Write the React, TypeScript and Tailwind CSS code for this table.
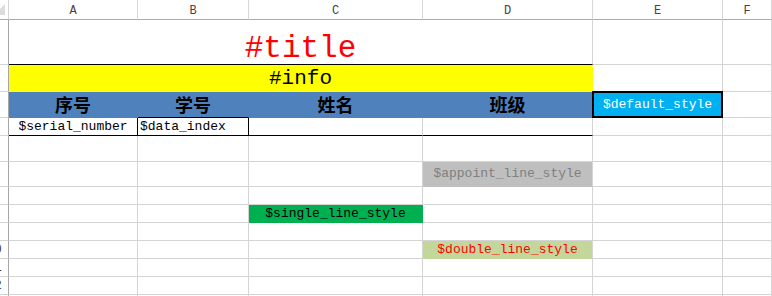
import type { ReactNode } from 'react'

const mono = 'font-["Liberation_Mono","DejaVu_Sans_Mono",monospace]'
const cjk = 'font-["Noto_Sans_CJK_SC",sans-serif]'

type CellProps = {
  className?: string
  children?: ReactNode
}

// plain spreadsheet cell: gridline on the right and bottom
const Cell = ({ className = '', children }: CellProps) => (
  <div
    className={`box-border border-r border-b flex items-center justify-center overflow-hidden whitespace-nowrap ${className}`}
  >
    {children}
  </div>
)

const grid = 'border-r-[#d4d4d4] border-b-[#d4d4d4]'

// row number column is scrolled almost out of view: only the right edge of two-digit numbers shows
const RowHead = ({ n }: { n?: number }) => (
  <div className="box-border border-r border-b border-r-[#a6a6a6] border-b-[#d4d4d4] overflow-hidden flex items-center justify-end">
    {n !== undefined && (
      <div className={`w-[27px] shrink-0 text-center text-[12px] text-[#333] ${mono}`}>{n}</div>
    )}
  </div>
)

const Empty = () => <Cell className={grid} />

export default function App() {
  return (
    <div className="w-[772px] h-[296px] overflow-hidden bg-white">
      <div className="grid grid-cols-[9px_129px_111px_174px_170px_130px_49px] grid-rows-[20px_45px_27px_26px_18px_26px_25px_18px_18px_18px_18px_18px_18px_18px]">
        {/* column headers */}
        <div className="box-border border-r border-b border-r-[#d4d4d4] border-b-[#ababab] overflow-hidden">
          <svg width="9" height="19" viewBox="0 0 9 19">
            <polygon points="-6,15 5,15 5,4" fill="#dcdcdc" />
          </svg>
        </div>
        {['A', 'B', 'C', 'D', 'E', 'F'].map((c) => (
          <div
            key={c}
            className={`box-border border-r border-b border-r-[#d8d8d8] border-b-[#ababab] flex items-center justify-center pt-[3px] text-[12px] text-[#444] ${mono}`}
          >
            {c}
          </div>
        ))}

        {/* row 1: title */}
        <RowHead />
        <Cell className={`col-span-4 border-r-[#d4d4d4] border-b-black items-end text-[31px] leading-none text-[#ff0000] ${mono}`}>
          #title
        </Cell>
        <Empty />
        <Empty />

        {/* row 2: info */}
        <RowHead />
        <Cell className={`col-span-4 bg-[#ffff00] border-r-[#ffff00] border-b-[#ffff00] text-[21px] leading-none text-black ${mono}`}>
          #info
        </Cell>
        <Empty />
        <Empty />

        {/* row 3: column titles */}
        <RowHead />
        <Cell className={`bg-[#4f81bd] border-r-[#4f81bd] border-b-[#4f81bd] text-[18px] font-bold text-black ${cjk}`}>序号</Cell>
        <Cell className={`bg-[#4f81bd] border-r-[#4f81bd] border-b-black text-[18px] font-bold text-black ${cjk}`}>学号</Cell>
        <Cell className={`bg-[#4f81bd] border-r-[#4f81bd] border-b-[#4f81bd] text-[18px] font-bold text-black ${cjk}`}>姓名</Cell>
        <Cell className={`bg-[#4f81bd] border-r-[#4f81bd] border-b-[#4f81bd] text-[18px] font-bold text-black ${cjk}`}>班级</Cell>
        <div className={`box-border -ml-px -mt-px border-2 border-black bg-[#00b0f0] flex items-center justify-center whitespace-nowrap text-[13px] text-white ${mono}`}>
          $default_style
        </div>
        <Empty />

        {/* row 4: data */}
        <RowHead />
        <Cell className={`border-r-black border-b-black text-[13px] text-black ${mono}`}>$serial_number</Cell>
        <Cell className={`border-r-black border-b-black justify-start pl-[2px] text-[13px] text-black ${mono}`}>$data_index</Cell>
        <Cell className="border-r-[#d4d4d4] border-b-black" />
        <Cell className="border-r-[#d4d4d4] border-b-black" />
        <Empty />
        <Empty />

        {/* row 5 */}
        <RowHead />
        <Empty />
        <Empty />
        <Empty />
        <Empty />
        <Empty />
        <Empty />

        {/* row 6: appoint line */}
        <RowHead />
        <Empty />
        <Empty />
        <Empty />
        <Cell className={`bg-[#bfbfbf] border-r-[#d4d4d4] border-b-[#bfbfbf] text-[13px] text-[#808080] ${mono}`}>$appoint_line_style</Cell>
        <Empty />
        <Empty />

        {/* row 7 */}
        <RowHead />
        <Empty />
        <Empty />
        <Empty />
        <Empty />
        <Empty />
        <Empty />

        {/* row 8: single line */}
        <RowHead />
        <Empty />
        <Empty />
        <Cell className={`bg-[#00b050] border-r-[#00b050] border-b-[#00b050] text-[13px] text-black ${mono}`}>$single_line_style</Cell>
        <Empty />
        <Empty />
        <Empty />

        {/* row 9 */}
        <RowHead />
        <Empty />
        <Empty />
        <Empty />
        <Empty />
        <Empty />
        <Empty />

        {/* row 10: double line */}
        <RowHead n={10} />
        <Empty />
        <Empty />
        <Empty />
        <Cell className={`bg-[#c4d79b] border-r-[#d4d4d4] border-b-[#c4d79b] text-[13px] text-[#ff0000] ${mono}`}>$double_line_style</Cell>
        <Empty />
        <Empty />

        {[11, 12, 13].map((n) => (
          <div key={n} className="contents">
            <RowHead n={n} />
            <Empty />
            <Empty />
            <Empty />
            <Empty />
            <Empty />
            <Empty />
          </div>
        ))}
      </div>
    </div>
  )
}
